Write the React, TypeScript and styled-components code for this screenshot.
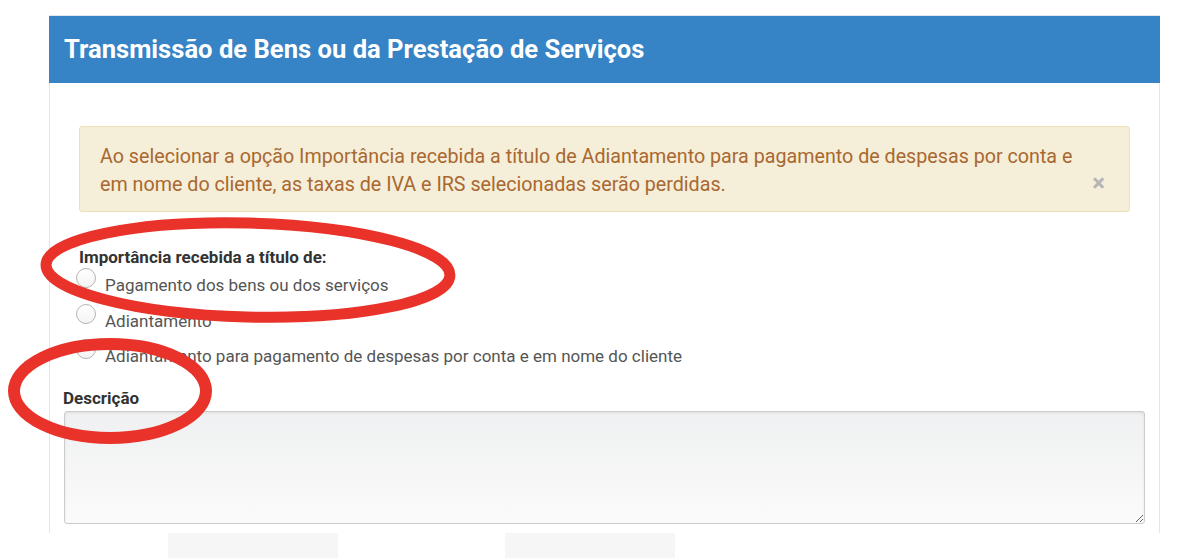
import React from "react";
import styled, { createGlobalStyle } from "styled-components";

const GlobalStyle = createGlobalStyle`
  html, body { margin: 0; padding: 0; background: #ffffff; }
  body { font-family: Roboto, "Noto Sans", Arial, sans-serif; overflow: hidden; }
  * { box-sizing: border-box; }
`;

const Page = styled.div`
  position: relative;
  width: 1188px;
  height: 558px;
  padding: 15px 0 0 49px;
`;

const Panel = styled.section`
  width: 1111px;
  display: flex;
  flex-direction: column;
`;

const PanelHeader = styled.header`
  height: 68px;
  background: #3683c6;
  display: flex;
  align-items: center;
  padding: 0 15px 2px 15px;
  border-top: 1px solid #dfe6ee;
`;

const Title = styled.h2`
  margin: 0;
  color: #ffffff;
  font-size: 25.6px;
  font-weight: 700;
  letter-spacing: 0;
`;

const PanelBody = styled.div`
  height: 450px;
  border-left: 1px solid #e4e4e4;
  border-right: 1px solid #e4e4e4;
  padding: 43px 0 0 0;
  display: flex;
  flex-direction: column;
`;

const Alert = styled.div`
  margin: 0 29px 0 29px;
  height: 86px;
  background: #f5eed9;
  border: 1px solid #efe0b8;
  border-radius: 3px;
  padding: 16px 30px 0 20px;
  position: relative;
  color: #a9682f;
  font-size: 19.7px;
  line-height: 27.5px;
`;

const Close = styled.span`
  position: absolute;
  right: 24px;
  top: 44px;
  color: #b5b5b5;
  font-size: 24px;
  font-weight: 700;
  line-height: 1;
`;

const RadioGroup = styled.fieldset`
  margin: 34px 0 0 29px;
  padding: 0;
  border: 0;
  display: flex;
  flex-direction: column;
`;

const GroupLabel = styled.legend`
  padding: 0;
  color: #333333;
  font-size: 17px;
  font-weight: 700;
  line-height: 22px;
`;

const RadioRow = styled.label`
  display: flex;
  align-items: flex-start;
  height: 35.5px;
  margin-left: -3px;
  color: #555555;
  font-size: 17px;
`;

const RadioCircle = styled.span`
  width: 20px;
  height: 20px;
  border-radius: 50%;
  border: 1px solid #b4b4b4;
  background: linear-gradient(#ffffff, #f4f4f4);
  flex: none;
`;

const RadioText = styled.span`
  margin-left: 9px;
  margin-top: 6px;
  line-height: 22px;
`;

const FieldLabel = styled.label`
  display: block;
  margin: 12px 0 0 13px;
  color: #333333;
  font-size: 17px;
  font-weight: 700;
  line-height: 22px;
`;

const TextArea = styled.textarea`
  display: block;
  margin: 2px 14px 0 14px;
  height: 113px;
  border: 1px solid #cccccc;
  border-radius: 3px;
  background: linear-gradient(#eff0f1, #fbfbfb);
  box-shadow: inset 0 1px 3px rgba(0, 0, 0, 0.08);
  resize: vertical;
  font-family: inherit;
  font-size: 16px;
`;

const Footer = styled.div`
  display: flex;
  gap: 167px;
  padding-left: 119px;
  height: 25px;
`;

const GhostButton = styled.div`
  width: 170px;
  height: 25px;
  background: #f6f6f6;
`;

const Annotations = styled.svg`
  position: absolute;
  left: 0;
  top: 0;
  pointer-events: none;
`;

const options = [
  "Pagamento dos bens ou dos serviços",
  "Adiantamento",
  "Adiantamento para pagamento de despesas por conta e em nome do cliente",
];

export default function App() {
  return (
    <>
      <GlobalStyle />
      <Page>
        <Panel>
          <PanelHeader>
            <Title>Transmissão de Bens ou da Prestação de Serviços</Title>
          </PanelHeader>
          <PanelBody>
            <Alert>
              Ao selecionar a opção Importância recebida a título de Adiantamento para pagamento de despesas por conta e em nome do cliente, as taxas de IVA e IRS selecionadas serão perdidas.
              <Close>×</Close>
            </Alert>
            <RadioGroup>
              <GroupLabel>Importância recebida a título de:</GroupLabel>
              {options.map((o) => (
                <RadioRow key={o}>
                  <RadioCircle />
                  <RadioText>{o}</RadioText>
                </RadioRow>
              ))}
            </RadioGroup>
            <FieldLabel>Descrição</FieldLabel>
            <TextArea />
          </PanelBody>
        </Panel>
        <Footer>
          <GhostButton />
          <GhostButton />
        </Footer>
        <Annotations width={1188} height={558} viewBox="0 0 1188 558">
          <ellipse cx={248} cy={270} rx={202} ry={47} fill="none" stroke="#e8322a" strokeWidth={11} transform="rotate(1.5 248 270)" />
          <ellipse cx={110} cy={391} rx={96} ry={47} fill="none" stroke="#e8322a" strokeWidth={12} />
        </Annotations>
      </Page>
    </>
  );
}
